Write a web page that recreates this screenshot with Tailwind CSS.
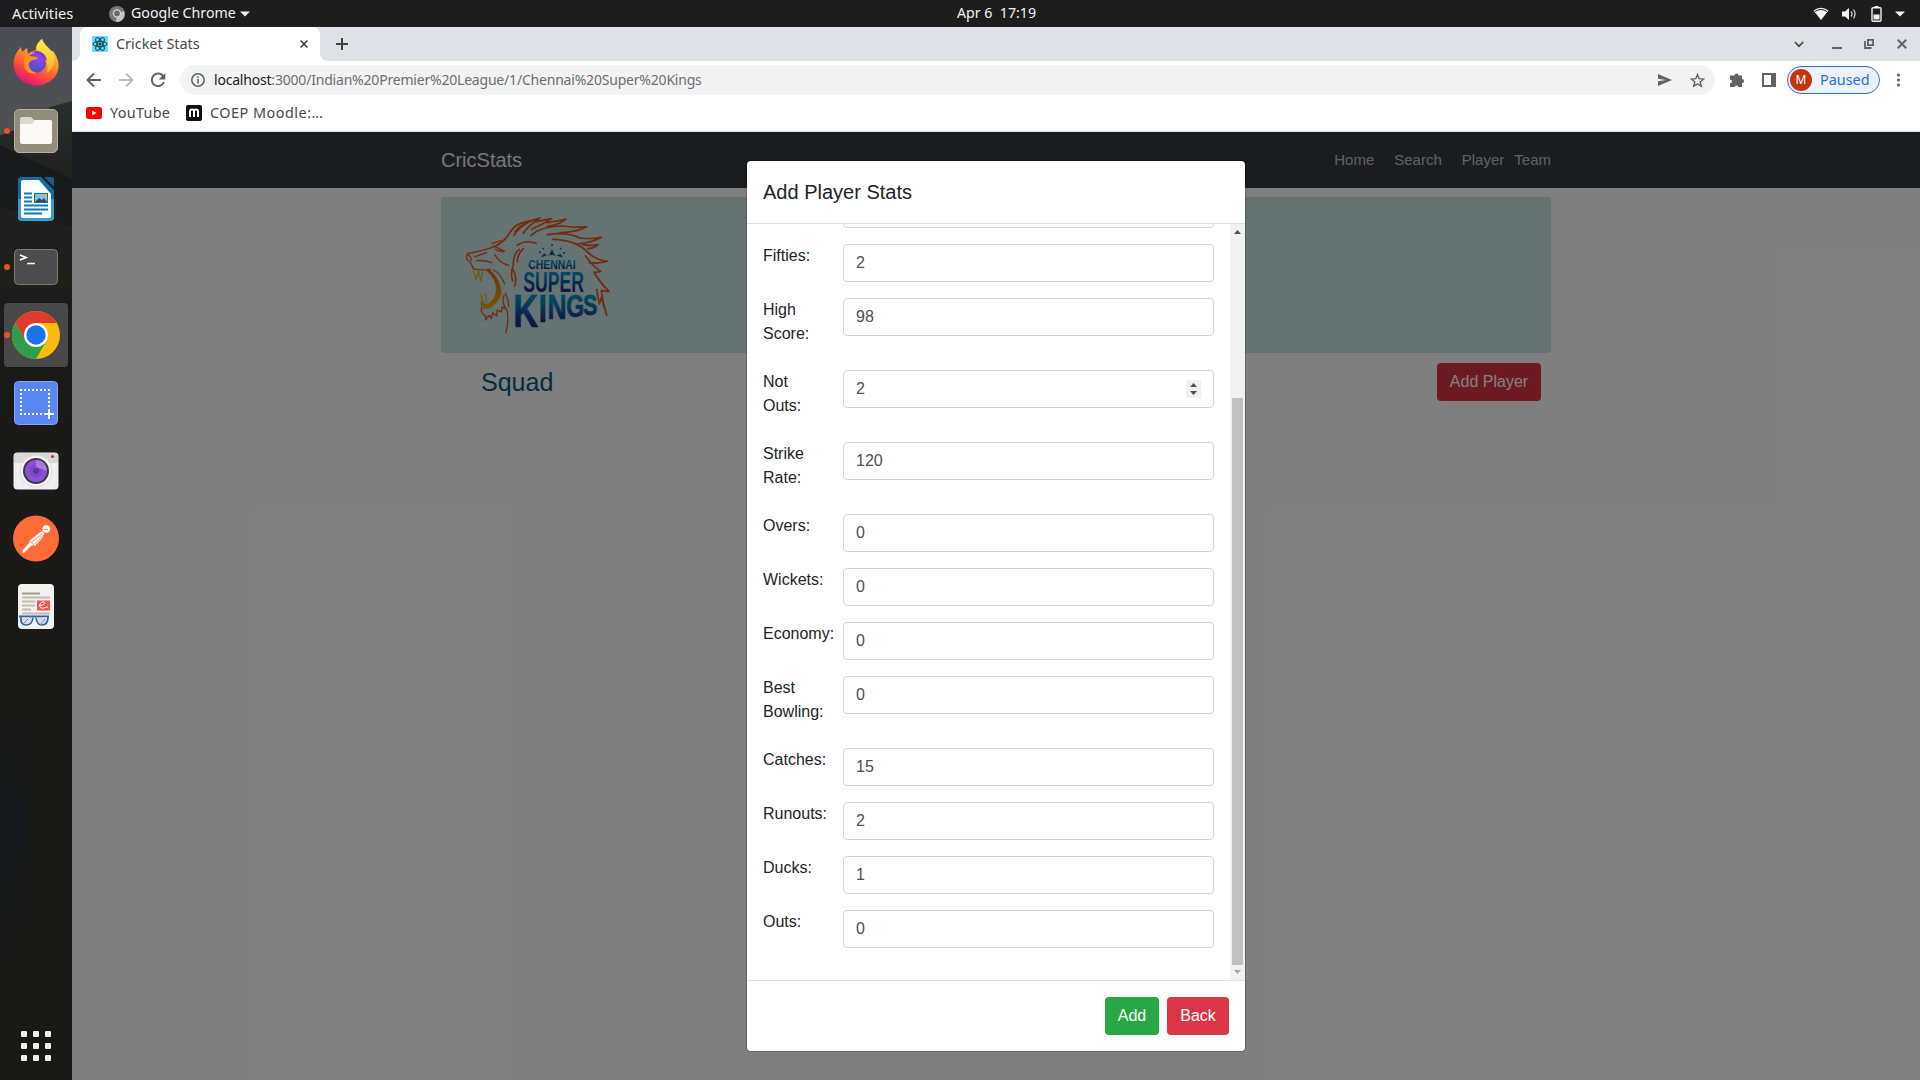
<!DOCTYPE html>
<html lang="en">
<head>
<meta charset="utf-8">
<title>Cricket Stats</title>
<script src="https://cdn.jsdelivr.net/npm/@tailwindcss/browser@4"></script>
</head>
<body class="flex h-[1080px] w-[1920px] flex-col overflow-hidden bg-[#1d1d1d] font-['Noto_Sans',sans-serif] text-[14.4px]">

<!-- Desktop top bar -->
<header class="grid h-[27px] shrink-0 grid-cols-[957px_1fr_auto] items-center bg-[#1d1d1d] leading-none text-[#f2f2f2]">
  <div class="flex items-center pl-3">
    <span class="w-[97px] text-[14.6px] tracking-[0.05px]">Activities</span>
    <svg class="mr-[6px] h-4 w-4" viewBox="0 0 16 16"><circle cx="8" cy="8" r="8" fill="#777"/><path d="M8 8 15 5a8 8 0 0 1-8 11z" fill="#c4c4c4"/><circle cx="8" cy="7.500" r="4.200" fill="#d8d8d8"/><circle cx="8" cy="7.500" r="2.900" fill="#6b6b6b"/></svg>
    <span class="text-[14.2px]">Google Chrome</span>
    <svg class="ml-[4px] h-[6px] w-[10px]" viewBox="0 0 10 6"><path d="M0 .5h10L5 5.500z" fill="#f2f2f2"/></svg>
  </div>
  <div class="whitespace-pre text-[14.2px]">Apr 6  17:19</div>
  <div class="flex items-center pr-[15px]">
    <svg class="h-4 w-4" viewBox="0 0 16 16"><path d="M.5 4.500Q8-1 15.500 4.500L8 14z" fill="#f2f2f2"/><path d="M2 5.500Q8 1.500 14 5.500" stroke="#1d1d1d" fill="none"/></svg>
    <svg class="ml-[12px] h-4 w-4" viewBox="0 0 16 16"><path d="M1 5.500h3L8 2v12L4 10.500H1z" fill="#f2f2f2"/><path d="M10 5.500q2 2.500 0 5M12.500 3.500q3 4.500 0 9" stroke="#d0d0d0" stroke-width="1.300" fill="none"/></svg>
    <svg class="ml-[14px] h-4 w-[11px]" viewBox="0 0 11 16"><path d="M3.500 0h4v1.500h-4z" fill="#f2f2f2"/><rect x="1" y="1.700" width="9" height="13.500" rx="1" fill="none" stroke="#f2f2f2" stroke-width="1.400"/><path d="M2.500 8.500h6v5h-6z" fill="#f2f2f2"/></svg>
    <svg class="ml-[13px] h-[6px] w-[10px]" viewBox="0 0 10 6"><path d="M0 .5h10L5 5.500z" fill="#f2f2f2"/></svg>
  </div>
</header>

<div class="flex min-h-0 flex-1">

  <!-- Dock -->
  <aside class="relative w-[72px] shrink-0 bg-[#181817]">
    <svg class="absolute inset-0 h-full w-full" viewBox="0 0 72 1053" preserveAspectRatio="none">
      <defs>
        <linearGradient id="sky" x2="0" y2="1"><stop offset="0" stop-color="#4a4e54"/><stop offset="1" stop-color="#505153"/></linearGradient>
        <linearGradient id="land" x2="0" y2="1"><stop offset="0" stop-color="#27302c"/><stop offset=".08" stop-color="#202120"/><stop offset=".25" stop-color="#1a1b19"/><stop offset="1" stop-color="#181817"/></linearGradient>
        <linearGradient id="water" x2="0" y2="1"><stop offset="0" stop-color="#181817"/><stop offset=".4" stop-color="#161a1d"/><stop offset="1" stop-color="#181817"/></linearGradient>
      </defs>
      <path d="M0 0h72v140H0z" fill="url(#sky)"/>
      <path d="M0 108 30 98 50 80 72 74V1053H0z" fill="url(#land)"/>
      <path d="M0 118 72 152V200L0 180z" fill="#181a1c"/>
      <path d="M0 232 40 224 72 236V262H0z" fill="#1f2019"/>
      <path d="M0 700h27V860L10 920H0z" fill="url(#water)"/>
    </svg>
    <div class="relative flex h-full flex-col items-center gap-1 pt-1">
      <!-- Firefox -->
      <svg class="h-16 w-16 shrink-0" viewBox="0 0 64 64">
        <defs>
          <linearGradient id="ff" x1=".8" x2=".3" y2="1"><stop offset="0" stop-color="#fff04a"/><stop offset=".4" stop-color="#ff9a20"/><stop offset=".7" stop-color="#ff4a3c"/><stop offset="1" stop-color="#e0107d"/></linearGradient>
          <linearGradient id="fl" x2="0" y2="1"><stop offset="0" stop-color="#fff04a"/><stop offset="1" stop-color="#ffae2a"/></linearGradient>
          <radialGradient id="globe" cx=".6" cy=".3"><stop offset="0" stop-color="#a040f5"/><stop offset="1" stop-color="#5350c9"/></radialGradient>
        </defs>
        <path d="M38 8c1 5 6 9 9 13l2-1c4 5 6 11 5.500 17C53 47 44 54.500 32 54.500S9.500 45 9.500 33c0-7 3-12 7.500-17l1 5 5-4 1 6c3-3 7-3 9-5 0-4 2-7 5-10z" fill="url(#ff)"/>
        <path d="M38 8c1 5 8 9 11 14 3 6 1 15-6 20 2-10-1-17-11-24 0-4 2-7 6-10z" fill="url(#fl)"/>
        <circle cx="32" cy="32" r="10" fill="url(#globe)"/>
        <path d="M20 23c4 2 9 2 13 3 1 1-1 3-4 3-3 1-5 3-4 6 1 4 4 6 8 7-8 2-14-3-13-10z" fill="#ff8f1f"/>
        <path d="M28 21c8-3 14 2 15 9l-4-4c-3-3-7-4-11-5z" fill="#8533d6"/>
      </svg>
      <!-- Files -->
      <svg class="h-16 w-16 shrink-0" viewBox="0 0 64 64">
        <circle cx="3" cy="32" r="3" fill="#e95420"/>
        <rect x="10.500" y="10.500" width="43" height="43" rx="4.500" fill="#948c7a" stroke="#b5ae9e"/>
        <path d="M16 20q0-2 2-2h9l3 3h15q3 0 3 3v5H16z" fill="#dcdad0"/>
        <path d="M16 25h12l3-4h15q2 0 2 2v20q0 2-2 2H18q-2 0-2-2z" fill="#faf9f7"/>
      </svg>
      <!-- Writer -->
      <svg class="h-16 w-16 shrink-0" viewBox="0 0 64 64">
        <path d="M18 10h19l13 13v27q0 4-4 4H18q-4 0-4-4V14q0-4 4-4z" fill="#0f6da3"/>
        <path d="M14 32h36v18q0 4-4 4H18q-4 0-4-4z" fill="#3f9bcb"/>
        <path d="M40 10h8q2 0 2 2v8z" fill="#135e8c"/>
        <path d="M19 13h16l12 14v22q0 2-2 2H19q-2 0-2-2V15q0-2 2-2z" fill="#fff"/>
        <path d="M20 26.500h8M20 30.500h8M20 34.500h8M20 38.500h24M20 42.500h24M20 46.500h18" stroke="#0f7ab8" stroke-width="2"/>
        <rect x="30.500" y="26.500" width="13" height="9" fill="#7cc3ec" stroke="#1270a8"/><path d="m31 35 4-4 3 2 2-2 3 4z" fill="#444"/><path d="M39 27h4v4z" fill="#f5b921"/>
      </svg>
      <!-- Terminal -->
      <svg class="h-16 w-16 shrink-0" viewBox="0 0 64 64">
        <circle cx="3" cy="32" r="3" fill="#e95420"/>
        <rect x="10.500" y="14.500" width="43" height="35" rx="4" fill="#4c4c4c" stroke="#7c7c7c"/>
        <path d="m16 20 6 2.500-6 2.500M23 28.500h8" stroke="#fff" stroke-width="1.700" fill="none"/>
      </svg>
      <!-- Chrome, the focused window -->
      <svg class="h-16 w-16 shrink-0 rounded bg-[#484848]" viewBox="0 0 64 64">
        <circle cx="3" cy="32" r="3" fill="#e95420"/>
        <circle cx="32" cy="32" r="24" fill="#fbbc0c"/>
        <path d="M11.200 20a24 24 0 0 1 41.600 0H32L21.600 38z" fill="#dc3b2e"/>
        <path d="M11.200 20A24 24 0 0 0 32 56l10.400-18H21.600z" fill="#2f9e4c"/>
        <circle cx="32" cy="32" r="12" fill="#fff"/><circle cx="32" cy="32" r="9.700" fill="#1a73e8"/>
      </svg>
      <!-- Screenshot -->
      <svg class="h-16 w-16 shrink-0" viewBox="0 0 64 64">
        <rect x="10.500" y="10.500" width="43" height="43" rx="4" fill="#5b87f2" stroke="#86a6f6"/>
        <path d="M16 19h30M16 43h25M17 18v26M45 18v20" stroke="#fff" stroke-width="2" stroke-dasharray="2 2" fill="none"/>
        <path d="M45 38v10M40 43h10" stroke="#fff" stroke-width="2"/>
      </svg>
      <!-- Camera -->
      <svg class="h-16 w-16 shrink-0" viewBox="0 0 64 64">
        <rect x="9.500" y="13.500" width="45" height="37" rx="4" fill="#f0f0f0"/><path d="M10 24v-7q0-3 3-3h38q3 0 3 3v7z" fill="#d9d9d9"/>
        <circle cx="32" cy="32" r="16" fill="#f4f4f4" stroke="#dcdcdc"/><circle cx="32" cy="32" r="13" fill="#3a3a42"/><circle cx="32" cy="32" r="11" fill="#8d50d6"/><circle cx="32" cy="32" r="6.500" fill="#7b49c4"/><path d="M32 21a11 11 0 0 1 11 11l-11-4z" fill="#ab7ae4"/><circle cx="32" cy="32" r="3" fill="#5d3797"/><circle cx="48.500" cy="17.500" r="1.600" fill="#e0222a"/>
      </svg>
      <!-- Postman -->
      <svg class="h-16 w-16 shrink-0" viewBox="0 0 64 64">
        <circle cx="32" cy="31.500" r="23" fill="#ff6c37"/>
        <circle cx="42.300" cy="22" r="3.800" fill="#fff"/><path d="M38 24 26 33l-1 3-6 7-1 3 3-1 7-7 3 1 8-9 1-4z" fill="#fff"/><path d="m38 27-10 8M39.500 28l-9 9M40 22.500h4M26 34l4 4" stroke="#ff6c37" stroke-width=".8"/>
      </svg>
      <!-- Document viewer -->
      <svg class="h-16 w-16 shrink-0" viewBox="0 0 64 64">
        <rect x="14" y="9" width="36" height="45" rx="4" fill="#f1f1f0"/>
        <path d="M18 18.500h18" stroke="#a79c86" stroke-width="2"/><path d="M18 22.500h28M18 26.500h13M18 30.500h13M18 34.500h9M18 38.500h28" stroke="#c4beb0" stroke-width="2"/>
        <rect x="33" y="25.500" width="13" height="10" fill="#f4564d"/><path d="M35 30c3 1 7-1 5-3-3-1-6 4-3 6 2 1 4-1 7-1" stroke="#fff" fill="none"/>
        <path d="M15 41.500h30" stroke="#2566ad" stroke-width="2" fill="none"/><path d="M17 42q-1 8 5 8 6 0 7-7M32 43q1 7 6 7 6 0 6-8" stroke="#2566ad" stroke-width="1.600" fill="#d9dde3"/><path d="m18 50 6-6m12 6 5-6" stroke="#888"/>
      </svg>
      <!-- App grid -->
      <div class="mt-auto mb-[19px] grid grid-cols-3 gap-[6px]">
        <i class="h-[6px] w-[6px] rounded-[1px] bg-[#eeeeec]"></i><i class="h-[6px] w-[6px] rounded-[1px] bg-[#eeeeec]"></i><i class="h-[6px] w-[6px] rounded-[1px] bg-[#eeeeec]"></i>
        <i class="h-[6px] w-[6px] rounded-[1px] bg-[#eeeeec]"></i><i class="h-[6px] w-[6px] rounded-[1px] bg-[#eeeeec]"></i><i class="h-[6px] w-[6px] rounded-[1px] bg-[#eeeeec]"></i>
        <i class="h-[6px] w-[6px] rounded-[1px] bg-[#eeeeec]"></i><i class="h-[6px] w-[6px] rounded-[1px] bg-[#eeeeec]"></i><i class="h-[6px] w-[6px] rounded-[1px] bg-[#eeeeec]"></i>
      </div>
    </div>
  </aside>

  <!-- Browser window -->
  <div class="flex min-w-0 flex-1 flex-col bg-white leading-none">

    <!-- Tab strip -->
    <div class="flex h-[34px] shrink-0 items-stretch bg-[#dee1e6]">
      <div class="w-2 bg-white"><div class="h-full rounded-br-lg bg-[#dee1e6]"></div></div>
      <div class="flex w-[240px] items-center rounded-t-lg bg-white pr-[11px] pl-3">
        <svg class="mr-2 h-4 w-4" viewBox="0 0 16 16"><rect width="16" height="16" rx="1" fill="#61dafb"/><g fill="none" stroke="#20404d" stroke-width="1"><ellipse cx="8" cy="8" rx="7" ry="2.700"/><ellipse cx="8" cy="8" rx="7" ry="2.700" transform="rotate(60 8 8)"/><ellipse cx="8" cy="8" rx="7" ry="2.700" transform="rotate(120 8 8)"/></g><circle cx="8" cy="8" r="1.500" fill="#20404d"/></svg>
        <span class="text-[#45494d]">Cricket Stats</span>
        <svg class="ml-auto h-[10px] w-[10px]" viewBox="0 0 10 10"><path d="m1.500 1.500 7 7m0-7-7 7" stroke="#45494d" stroke-width="1.700"/></svg>
      </div>
      <div class="w-2 bg-white"><div class="h-full rounded-bl-lg bg-[#dee1e6]"></div></div>
      <svg class="ml-2 h-3 w-3 self-center" viewBox="0 0 12 12"><path d="M6 0v12M0 6h12" stroke="#3c4043" stroke-width="2"/></svg>
      <div class="ml-auto flex items-center pr-[13px]">
        <svg class="mr-[28px] h-[10px] w-[10px]" viewBox="0 0 10 10"><path d="m.8 3 4.200 4.200L9.200 3" stroke="#45494d" stroke-width="1.700" fill="none"/></svg>
        <svg class="mr-[22px] h-[10px] w-[10px]" viewBox="0 0 10 10"><path d="M0 9h10" stroke="#5f6368" stroke-width="2"/></svg>
        <svg class="mr-[23px] h-[10px] w-[10px]" viewBox="0 0 10 10"><path d="M3.900.9h5.200v5.200H3.900z M1 2v7h6.500" stroke="#5f6368" stroke-width="1.800" fill="none"/></svg>
        <svg class="h-[10px] w-[10px]" viewBox="0 0 10 10"><path d="m.7.7 8.600 8.600m0-8.600L.7 9.300" stroke="#5f6368" stroke-width="2"/></svg>
      </div>
    </div>

    <!-- Toolbar -->
    <div class="flex h-[38px] shrink-0 items-center pl-[14px]">
      <svg class="h-4 w-4" viewBox="0 0 16 16"><path d="M15 8H2M8 1.500 1.500 8 8 14.500" stroke="#5f6368" stroke-width="2" fill="none"/></svg>
      <svg class="ml-4 h-4 w-4" viewBox="0 0 16 16"><path d="M1 8h13M8 1.500 14.500 8 8 14.500" stroke="#babcbe" stroke-width="2" fill="none"/></svg>
      <svg class="ml-4 h-4 w-4" viewBox="0 0 16 16"><path d="M13.500 4.500A6.300 6.300 0 1 0 14 10" stroke="#5f6368" stroke-width="2" fill="none"/><path d="M15.300 1v6.500H8.800z" fill="#5f6368"/></svg>
      <div class="ml-[14px] flex h-[30px] w-[1535px] items-center rounded-full bg-[#f1f3f4] pr-[10px] pl-[11px]">
        <svg class="mr-[9px] h-[14px] w-[14px]" viewBox="0 0 14 14"><circle cx="7" cy="7" r="6.200" stroke="#5f6368" stroke-width="1.500" fill="none"/><path d="M7 6v4.500M7 3.200v1.600" stroke="#5f6368" stroke-width="1.600"/></svg>
        <span class="text-[14px] tracking-[-0.2px] text-[#6b6f73]"><span class="text-[#202124]">localhost</span>:3000/Indian%20Premier%20League/1/Chennai%20Super%20Kings</span>
        <svg class="ml-auto h-3 w-[14px]" viewBox="0 0 14 12"><path d="M0 0 14 6 0 12V7.200L8 6 0 4.800z" fill="#5f6368"/></svg>
        <svg class="ml-[18px] h-[15px] w-[15px]" viewBox="0 0 15 15"><path d="m7.500 1.500 1.700 4.200 4.500.3-3.500 2.900 1.100 4.400-3.800-2.400-3.800 2.400 1.100-4.400L1.300 6l4.500-.3z" stroke="#5f6368" stroke-width="1.400" fill="none"/></svg>
      </div>
      <svg class="ml-[15px] h-[16px] w-[16px]" viewBox="0 0 16 16"><path d="M0 3.500h4.500a2 2 0 0 1 4.200 0H12V7a2 2 0 0 1 0 4.200V15H8.500a1.900 1.900 0 0 0-3.700 0H0v-3.700a1.900 1.900 0 0 0 0-3.800z" fill="#5f6368"/></svg>
      <svg class="ml-[16px] h-[14px] w-[14px]" viewBox="0 0 14 14"><path d="M0 0h14v14H0zM2 2v10h7V2z" fill="#5f6368" fill-rule="evenodd"/></svg>
      <div class="ml-[11px] flex h-7 w-[93px] items-center rounded-full border border-[#2a6fdb] bg-[#ecf2fc] pl-[2px]">
        <span class="flex h-[22px] w-[22px] items-center justify-center rounded-full bg-[#c1360c] text-[12px] text-white">M</span>
        <span class="ml-[8px] text-[#2a6fdb]">Paused</span>
      </div>
      <svg class="ml-[16px] h-[14px] w-[5px]" viewBox="0 0 5 14"><circle cx="2.500" cy="2" r="1.600" fill="#5f6368"/><circle cx="2.500" cy="7" r="1.600" fill="#5f6368"/><circle cx="2.500" cy="12" r="1.600" fill="#5f6368"/></svg>
    </div>

    <!-- Bookmarks -->
    <div class="flex h-[33px] shrink-0 items-center border-b border-[#d3dcdc] pb-1 pl-[14px] text-[#45494d]">
      <svg class="mr-2 h-4 w-4" viewBox="0 0 16 16"><rect y="2" width="16" height="12" rx="2.500" fill="#f00"/><path d="m6.200 5.500 4.300 2.500-4.300 2.500z" fill="#fff"/></svg>
      <span class="w-[76px] tracking-[0.3px]">YouTube</span>
      <svg class="mr-2 h-4 w-4" viewBox="0 0 16 16"><rect width="16" height="16" rx="2" fill="#111"/><path d="M4 12V6q0-1.500 2-1.500T8 6v6M8 6q0-1.500 2-1.500T12 6v6" stroke="#fff" stroke-width="2" fill="none"/></svg>
      <span class="tracking-[0.5px]">COEP Moodle:…</span>
    </div>

    <!-- Web page -->
    <div class="relative min-h-0 flex-1 overflow-hidden bg-white font-['Liberation_Sans',Arial,sans-serif] text-base">
      <nav class="h-14 bg-[#343a40]">
        <div class="mx-auto flex h-full w-[1110px] items-center justify-between">
          <span class="text-xl leading-none text-white/90">CricStats</span>
          <div class="flex gap-5 text-[15px] text-white/70"><span>Home</span><span>Search</span><span>Player</span><span class="-ml-[10px]">Team</span></div>
        </div>
      </nav>
      <main class="mx-auto w-[1110px] pt-[9px]">
        <section class="h-[156px] rounded bg-[#cbe6e6] pt-[13px] pl-[19px]">
          <svg class="h-[130px] w-[155px] overflow-visible" viewBox="0 0 465 390">
            <defs>
              <linearGradient id="kb" x2="0" y2="1"><stop offset=".25" stop-color="#0090c4"/><stop offset=".7" stop-color="#1c2f92"/></linearGradient>
              <linearGradient id="jaw" x2="0" y2="1"><stop offset="0" stop-color="#d86a10"/><stop offset="1" stop-color="#f0ac10"/></linearGradient>
            </defs>
            <!-- Mane -->
            <g fill="none" stroke="#e8571a" stroke-width="5" stroke-linejoin="round" stroke-linecap="round">
              <path d="M97 112Q132 98 147 72 164 38 214 32 178 48 162 76"/>
              <path d="M165 66Q186 36 240 24 208 44 190 70"/>
              <path d="M222 36Q255 30 275 26 250 42 215 58M262 38Q290 34 318 27 298 44 262 50"/>
              <path d="M213 76Q245 48 310 48 350 54 380 50 352 66 300 68"/>
              <path d="M262 74Q320 64 360 84 395 88 424 82 398 98 352 102"/>
              <path d="M278 88Q345 90 378 122 405 150 442 154 418 162 388 158"/>
              <path d="M368 104Q392 108 414 104 400 116 384 116"/>
              <path d="M376 138Q400 170 422 184 412 188 402 186 418 216 447 244 432 244 424 242 428 280 440 316"/>
              <path d="M410 238 418 282 424 262 434 296"/>
              <path d="M172 106Q196 88 228 100M178 118Q158 134 160 166 150 190 158 212M190 116Q172 132 172 156M160 180Q172 206 164 228"/>
            </g>
            <!-- Face -->
            <g fill="none" stroke="#e8571a" stroke-width="4" stroke-linejoin="round" stroke-linecap="round">
              <path d="M97 112Q55 126 24 130 16 136 22 150 32 154 40 176 60 182 92 178"/>
              <path d="M24 134Q34 140 34 152M45 140 80 128M50 152Q72 150 96 158M104 110Q118 116 134 124 118 126 106 118M96 100 124 92M104 134Q120 160 146 166M100 180Q122 190 134 222"/>
              <path d="M132 256Q124 276 140 300 148 320 138 368M136 250Q146 268 146 290"/>
              <path d="M64 294Q62 312 78 318L76 330 88 316 94 326 98 308 110 318 112 300 124 306 126 290 134 296"/>
            </g>
            <!-- Jaw and fangs -->
            <path d="M88 178Q126 212 124 252 106 298 72 298 58 294 64 270 74 284 86 280 106 264 108 242 110 208 80 182z" fill="url(#jaw)"/>
            <path d="M40 178 48 208 56 184 62 214 68 184M62 252 70 282M76 248 80 276" fill="none" stroke="#e2b21a" stroke-width="4"/>
            <!-- Crown -->
            <g fill="#0b5fa5"><path d="m243 142 9-12 13 9 11-21 11 21 14-8 8 12q-33-16-66-1z"/><circle cx="276" cy="105" r="3"/><circle cx="240" cy="127" r="3"/><circle cx="312" cy="129" r="3"/><circle cx="250" cy="116" r="2.500"/><circle cx="302" cy="116" r="2.500"/></g>
            <!-- Wordmark -->
            <g font-family="'Liberation Sans',sans-serif" font-weight="bold" fill="url(#kb)">
              <text x="205" y="178" font-size="36" textLength="142" lengthAdjust="spacingAndGlyphs">CHENNAI</text>
              <text x="190" y="247" font-size="87" textLength="182" lengthAdjust="spacingAndGlyphs">SUPER</text>
              <text transform="scale(.75 1)" stroke="url(#kb)" stroke-width="2"><tspan x="213" y="350" font-size="138">K</tspan><tspan x="315" y="336" font-size="118">I</tspan><tspan x="350" y="328" font-size="106">N</tspan><tspan x="425" y="320" font-size="92">G</tspan><tspan x="492" y="314" font-size="86">S</tspan></text>
            </g>
          </svg>
        </section>
        <div class="flex items-center justify-between pt-[10px] pr-[10px] pl-[40px]">
          <h3 class="text-[25px] leading-none text-[#006080]">Squad</h3>
          <button class="h-[38px] w-[104px] rounded bg-[#dc3545] text-white">Add Player</button>
        </div>
      </main>

      <!-- Backdrop and dialog -->
      <div class="absolute inset-0 flex items-start justify-center bg-black/50 pt-7">
        <div class="flex h-[892px] w-[500px] flex-col overflow-hidden rounded-[4.8px] border border-black/20 bg-white bg-clip-padding leading-6 text-[#212529]">
          <div class="h-[63px] shrink-0 border-b border-[#dee2e6] p-4 text-xl leading-[30px]">Add Player Stats</div>
          <div class="flex min-h-0 flex-1">
            <div id="stats" class="flex-1 overflow-hidden pr-4 pl-4"></div>
            <div class="flex w-[15px] flex-col items-center bg-[#f1f1f1]">
              <svg class="mt-[6px] h-1 w-[7px] shrink-0" viewBox="0 0 7 4"><path d="M0 4 3.500 0 7 4z" fill="#505050"/></svg>
              <div class="mt-[164px] h-[567px] w-[11px] shrink-0 bg-[#c1c1c1]"></div>
              <svg class="mt-[5px] h-1 w-[7px] shrink-0" viewBox="0 0 7 4"><path d="M0 0 3.500 4 7 0z" fill="#a3a3a3"/></svg>
            </div>
          </div>
          <div class="flex h-[71px] shrink-0 justify-end gap-2 border-t border-[#dee2e6] p-4 text-white">
            <button class="h-[38px] w-[54px] rounded bg-[#28a745]">Add</button>
            <button class="h-[38px] w-[62px] rounded bg-[#dc3545]">Back</button>
          </div>
        </div>
      </div>
    </div>
  </div>
</div>

<script>
const rows = [["", ""], ["Fifties:", "2"], ["High<br>Score:", "98"], ["Not<br>Outs:", "2", true], ["Strike<br>Rate:", "120"], ["Overs:", "0"], ["Wickets:", "0"], ["Economy:", "0"], ["Best<br>Bowling:", "0"], ["Catches:", "15"], ["Runouts:", "2"], ["Ducks:", "1"], ["Outs:", "0"]];
const spinner = '<svg class="h-[18px] w-[15px]" viewBox="0 0 15 18"><path d="M0 0h15v18H0z" fill="#f0f0f0"/><path d="M4 7 7.500 3 11 7zM4 11l3.500 4L11 11z" fill="#505050"/></svg>';
document.getElementById("stats").innerHTML = rows.map(([label, value, spin], i) =>
  `<div class="mb-4 flex items-start ${i === 0 ? "-mt-[34px]" : ""}">
    <div class="mb-2 w-20 shrink-0">${label}</div>
    <div class="flex h-[38px] flex-1 items-center justify-between rounded border border-[#ced4da] px-3 text-[#495057]"><span>${value}</span>${spin ? spinner : ""}</div>
  </div>`).join("");
</script>
</body>
</html>
